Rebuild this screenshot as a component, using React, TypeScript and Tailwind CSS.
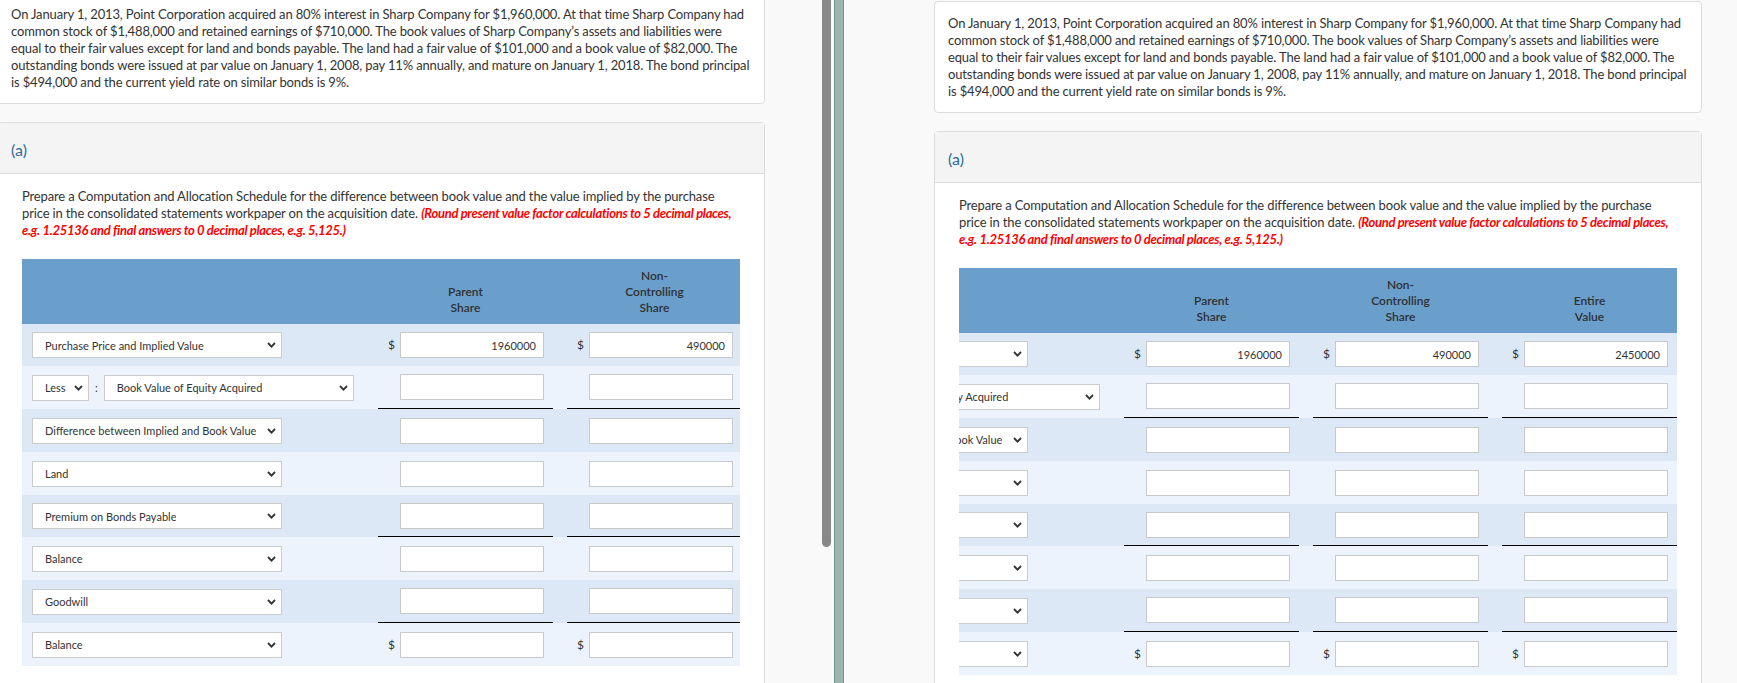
import React from "react";

type Row = {
  label: string;
  less?: boolean;
  dollar?: boolean;
  underline?: boolean;
  vals?: string[];
  h: string;
  dark: boolean;
};

const rows: Row[] = [
  { label: "Purchase Price and Implied Value", dollar: true, vals: ["1960000", "490000", "2450000"], h: "h-[42px]", dark: true },
  { label: "Book Value of Equity Acquired", less: true, underline: true, h: "h-[43px]", dark: false },
  { label: "Difference between Implied and Book Value", h: "h-[43px]", dark: true },
  { label: "Land", h: "h-[43px]", dark: false },
  { label: "Premium on Bonds Payable", underline: true, h: "h-[42px]", dark: true },
  { label: "Balance", h: "h-[43px]", dark: false },
  { label: "Goodwill", underline: true, h: "h-[43px]", dark: true },
  { label: "Balance", dollar: true, h: "h-[43px]", dark: false },
];

const Chevron = () => (
  <svg width="9" height="6" viewBox="0 0 9 6" className="shrink-0">
    <polyline points="1,1 4.5,4.6 8,1" fill="none" stroke="#333" strokeWidth="1.8" />
  </svg>
);

function Select({ label, className }: { label: string; className: string }) {
  return (
    <div
      className={
        "flex h-[26px] shrink-0 items-center justify-between overflow-hidden whitespace-nowrap border border-[#cbcbcb] bg-white pl-[12px] pr-[5px] text-[11px] text-[#333] " +
        className
      }
    >
      <span className="overflow-hidden">{label}</span>
      <Chevron />
    </div>
  );
}

function ValueCell({ dollar, value, underline }: { dollar?: boolean; value?: string; underline?: boolean }) {
  return (
    <div
      className={
        "ml-[14px] flex w-[175px] shrink-0 items-center self-stretch pl-[10px] " +
        (underline ? "border-b border-black" : "")
      }
    >
      <span className="w-[12px] text-[12px] leading-[12px] text-[#333]">{dollar ? "$" : ""}</span>
      <input
        readOnly
        value={value ?? ""}
        className="h-[26px] w-[144px] border border-[#c9c9c9] bg-white pr-[7px] text-right text-[11px] text-[#333] outline-none"
      />
    </div>
  );
}

function Table({ headers, colCount }: { headers: string[][]; colCount: number }) {
  return (
    <div className={colCount === 3 ? "-ml-[191px] w-[909px]" : "w-[720px]"}>
      <div className="flex h-[65px] bg-[#6a9ecb]">
        <div className="w-[342px] shrink-0" />
        {headers.map((lines, i) => (
          <div
            key={i}
            className="ml-[14px] flex w-[175px] shrink-0 flex-col items-center justify-end pb-[8px] text-[12px] font-semibold leading-[16px] text-[#2f3133]"
          >
            {lines.map((l) => (
              <div key={l}>{l}</div>
            ))}
          </div>
        ))}
      </div>
      {rows.map((r, ri) => (
        <div key={ri} className={"flex items-center " + r.h + " " + (r.dark ? "bg-[#dde8f7]" : "bg-[#ecf3fd]")}>
          <div className="flex w-[342px] shrink-0 items-center pl-[10px]">
            {r.less ? (
              <>
                <Select label="Less" className="w-[57px]" />
                <span className="ml-[6px] mr-[6px] text-[11px] text-[#333]">:</span>
                <Select label={r.label} className="w-[250px]" />
              </>
            ) : (
              <Select label={r.label} className="w-[250px]" />
            )}
          </div>
          {Array.from({ length: colCount }).map((_, ci) => (
            <ValueCell key={ci} dollar={r.dollar} value={r.vals ? r.vals[ci] : ""} underline={r.underline} />
          ))}
        </div>
      ))}
    </div>
  );
}

function Panel({ three }: { three: boolean }) {
  const headers = three
    ? [["Parent", "Share"], ["Non-", "Controlling", "Share"], ["Entire", "Value"]]
    : [["Parent", "Share"], ["Non-", "Controlling", "Share"]];
  return (
    <div className="w-[768px]">
      <div className="rounded-[4px] border border-[#dcdcdc] bg-white pb-[12px] pl-[13px] pr-[13px] pt-[13px] text-[13px] leading-[17px] tracking-[-0.15px] text-[#333]">
        <div className="whitespace-nowrap">
          On January 1, 2013, Point Corporation acquired an 80% interest in Sharp Company for $1,960,000. At that time Sharp Company had
        </div>
        <div className="whitespace-nowrap">
          common stock of $1,488,000 and retained earnings of $710,000. The book values of Sharp Company’s assets and liabilities were
        </div>
        <div className="whitespace-nowrap">
          equal to their fair values except for land and bonds payable. The land had a fair value of $101,000 and a book value of $82,000. The
        </div>
        <div className="whitespace-nowrap">
          outstanding bonds were issued at par value on January 1, 2008, pay 11% annually, and mature on January 1, 2018. The bond principal
        </div>
        <div className="whitespace-nowrap">is $494,000 and the current yield rate on similar bonds is 9%.</div>
      </div>
      <div className="mt-[18px] h-[600px] rounded-t-[4px] border border-[#dcdcdc] bg-white">
        <div className="border-b border-[#dcdcdc] bg-[#f4f4f4] pb-[13px] pl-[13px] pt-[17px] text-[16px] leading-[20px] text-[#2f6b9c]">
          (a)
        </div>
        <div className="px-[24px] pt-[14px] text-[13px] leading-[17px] text-[#333]">
          <div className="tracking-[-0.15px]">
            <div className="whitespace-nowrap">
              Prepare a Computation and Allocation Schedule for the difference between book value and the value implied by the purchase
            </div>
            <div className="whitespace-nowrap">
              price in the consolidated statements workpaper on the acquisition date.{" "}
              <span className="font-bold italic tracking-[-0.3px] text-[#f00]">
                (Round present value factor calculations to 5 decimal places,
              </span>
            </div>
            <div className="whitespace-nowrap font-bold italic tracking-[-0.3px] text-[#f00]">
              e.g. 1.25136 and final answers to 0 decimal places, e.g. 5,125.)
            </div>
          </div>
          <div className="mt-[20px] w-[718px] overflow-hidden">
            <Table headers={headers} colCount={three ? 3 : 2} />
          </div>
        </div>
      </div>
    </div>
  );
}

export default function App() {
  return (
    <div className="flex h-[683px] w-[1737px] overflow-hidden bg-[#f9f9f9] font-['Lato',sans-serif] text-[#333]">
      <div className="w-[822px] shrink-0 overflow-hidden">
        <div className="-ml-[3px] -mt-[8px]">
          <Panel three={false} />
        </div>
      </div>
      <div className="w-[9px] shrink-0">
        <div className="h-[547px] w-full rounded-b-full bg-[#888888]" />
      </div>
      <div className="w-[3px] shrink-0" />
      <div className="w-[10px] shrink-0 border-x border-[#74948d] bg-[#99b6af]" />
      <div className="shrink-0 pl-[90px] pt-px">
        <Panel three={true} />
      </div>
    </div>
  );
}
